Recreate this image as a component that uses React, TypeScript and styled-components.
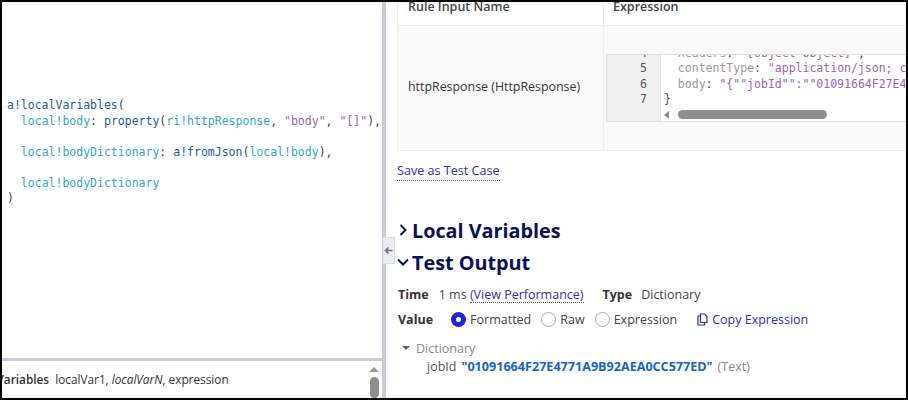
import styled, { createGlobalStyle } from "styled-components";

const GlobalStyle = createGlobalStyle`
  html, body {
    margin: 0;
    padding: 0;
    background: #fff;
  }
  body {
    font-family: "Open Sans", sans-serif;
    color: #333;
  }
`;

// Style >>>
const Frame = styled.div`
  width: 908px;
  height: 400px;
  box-sizing: border-box;
  border: 2px solid #000;
  display: flex;
  overflow: hidden;
  background: #fff;
`;
const LeftPane = styled.div`
  width: 380px;
  flex: none;
  display: flex;
  flex-direction: column;
`;
const Editor = styled.div`
  height: 359px;
  flex: none;
  box-sizing: border-box;
  padding-top: 96px;
  padding-left: 5px;
  border-bottom: 3px solid #c8ccd6;
`;
const CodeLine = styled.div`
  height: 15.5px;
  line-height: 15.5px;
  font-family: "DejaVu Sans Mono", monospace;
  font-size: 11.5px;
  white-space: pre;
  color: #444;
`;
const Fn = styled.span`
  color: #1d5c9c;
`;
const Local = styled.span`
  color: #36a3d3;
`;
const Str = styled.span`
  color: #9268b8;
`;
const Hint = styled.div`
  flex: 1;
  min-height: 0;
  display: flex;
  justify-content: space-between;
  overflow: hidden;
`;
const HintText = styled.div`
  font-size: 11.8px;
  line-height: 16px;
  margin-top: 10px;
  margin-left: -32px;
  white-space: pre;
  color: #333;
  b {
    font-weight: 600;
  }
`;
const HintScroll = styled.div`
  width: 10px;
  margin-right: 3px;
  margin-top: 6px;
  display: flex;
  flex-direction: column;
  align-items: center;
  gap: 5px;
  .track {
    width: 9px;
    height: 30px;
    border-radius: 5px;
    background: #8e8e8e;
  }
`;
const ArrowUp = styled.div`
  width: 0;
  height: 0;
  border: solid transparent;
  border-width: 0 5px 5px;
  border-bottom-color: #999;
`;
const Divider = styled.div`
  width: 4px;
  flex: none;
  background: #c8ccd6;
  position: relative;
`;
const CollapseTab = styled.div`
  position: absolute;
  left: 1px;
  top: 235px;
  width: 12px;
  height: 27px;
  box-sizing: border-box;
  background: #eaecf2;
  border: 1px solid #d8dbe2;
  border-left: none;
  display: flex;
  align-items: center;
  justify-content: center;
`;
const RightPane = styled.div`
  flex: 1;
  min-width: 0;
  overflow: hidden;
  padding-left: 11px;
  position: relative;
`;
const Table = styled.div`
  display: grid;
  grid-template-columns: 205px 1fr;
  margin-right: -4px;
  background: #fafafa;
  border-bottom: 1px solid #eee;
  border-left: 1px solid #eee;
`;
const HeadCell = styled.div<{ $first?: boolean }>`
  height: 23px;
  background: #fff;
  border-bottom: 1px solid #eee;
  border-left: ${({ $first }) => ($first ? "none" : "1px solid #eee")};
  font-size: 12.5px;
  font-weight: 600;
  line-height: 9px;
  padding-left: ${({ $first }) => ($first ? "10px" : "9px")};
  color: #444;
`;
const NameCell = styled.div`
  height: 124px;
  font-size: 12.4px;
  padding-left: 10px;
  padding-bottom: 3px;
  box-sizing: border-box;
  display: flex;
  align-items: center;
  color: #333;
`;
const ExprCell = styled.div`
  height: 124px;
  border-left: 1px solid #eee;
  padding-top: 28px;
  padding-left: 2px;
  box-sizing: border-box;
`;
const CodeBox = styled.div`
  height: 66px;
  display: flex;
  background: #fff;
  border: 1px solid #ddd;
  border-right: none;
  overflow: hidden;
`;
const Gutter = styled.div`
  width: 54px;
  flex: none;
  box-sizing: border-box;
  background: #f0f0f0;
  border-right: 1px solid #e4e4e4;
`;
const GutterNum = styled.div`
  height: 15.3px;
  line-height: 15.3px;
  text-align: right;
  padding-right: 13px;
  font-family: "DejaVu Sans Mono", monospace;
  font-size: 11.5px;
  color: #555;
  &:first-child {
    margin-top: -9px;
  }
`;
const CodeBody = styled.div`
  flex: 1;
  min-width: 0;
  position: relative;
  padding-left: 3px;
`;
const BoxLine = styled.div`
  height: 15.3px;
  line-height: 15.3px;
  font-family: "DejaVu Sans Mono", monospace;
  font-size: 11.5px;
  white-space: pre;
  color: #555;
  &:first-child {
    margin-top: -9px;
  }
  .key {
    color: #999;
  }
`;
const ScrollTrack = styled.div`
  position: absolute;
  left: 3px;
  bottom: 2px;
  display: flex;
  align-items: center;
  gap: 9px;
  .thumb {
    width: 149px;
    height: 9px;
    border-radius: 5px;
    background: #8e8e8e;
  }
`;
const ArrowLeft = styled.div`
  width: 0;
  height: 0;
  border: solid transparent;
  border-width: 4px 5px 4px 0;
  border-right-color: #888;
`;
const SaveLink = styled.a`
  display: inline-block;
  margin-top: 11px;
  margin-bottom: 33px;
  font-size: 12.6px;
  line-height: 18px;
  color: #2b2fb8;
  border-bottom: 1px dotted #555;
`;
const Section = styled.div`
  display: flex;
  align-items: center;
  height: 32px;
  gap: 3px;
  font-size: 19.8px;
  font-weight: 700;
  color: #0a1058;
`;
const Row = styled.div<{ $top?: number }>`
  display: flex;
  align-items: center;
  height: 25px;
  margin-top: ${({ $top }) => $top ?? 0}px;
  margin-left: 1px;
  font-size: 12.5px;
  white-space: pre;
  color: #444;
`;
const Label = styled.span<{ $left?: number; $right?: number }>`
  font-weight: 700;
  color: #333;
  margin-left: ${({ $left }) => $left ?? 0}px;
  margin-right: ${({ $right }) => $right ?? 0}px;
`;
const DottedLink = styled.span`
  color: #2b2fb8;
  border-bottom: 1px dotted #555;
  line-height: 15px;
`;
const Radio = styled.span<{ $on?: boolean; $left: number }>`
  width: 15px;
  height: 15px;
  box-sizing: border-box;
  border-radius: 50%;
  flex: none;
  margin-left: ${({ $left }) => $left}px;
  margin-right: 4px;
  background: #fff;
  border: ${({ $on }) => ($on ? "5px solid #2323d8" : "1px solid #aaa")};
`;
const CopyLink = styled.span`
  display: flex;
  align-items: center;
  gap: 3px;
  color: #2b2fb8;
  margin-left: 19px;
`;
const TreeRow = styled.div`
  display: flex;
  align-items: center;
  height: 18px;
  margin-top: 7px;
  margin-left: 5px;
  gap: 6px;
  font-size: 12.5px;
  color: #8a8a8a;
`;
const Caret = styled.span`
  width: 0;
  height: 0;
  border: solid transparent;
  border-width: 4px 4px 0;
  border-top-color: #666;
`;
const TreeValue = styled.div`
  display: flex;
  align-items: center;
  gap: 5px;
  height: 19px;
  margin-left: 30px;
  font-size: 12.5px;
  white-space: pre;
  color: #555;
  b {
    font-size: 12.6px;
    font-weight: 700;
    color: #1565c0;
  }
  span {
    color: #8a8a8a;
  }
`;
// Style <<<

const Chevron = ({ down }: { down?: boolean }) => (
  <svg width="12" height="12" viewBox="0 0 12 12" fill="none" stroke="#0a1058" strokeWidth="2">
    {down ? <path d="M1 3.5 6 8.5 11 3.5" /> : <path d="M3.5 1 8.5 6 3.5 11" />}
  </svg>
);

const App = () => {
  return (
    <>
      <GlobalStyle />
      <Frame>
        <LeftPane>
          <Editor>
            <CodeLine><Fn>a!localVariables</Fn>(</CodeLine>
            <CodeLine>  <Local>local!body</Local>: <Fn>property</Fn>(<Local>ri!httpResponse</Local>, <Str>"body"</Str>, <Str>"[]"</Str>),</CodeLine>
            <CodeLine> </CodeLine>
            <CodeLine>  <Local>local!bodyDictionary</Local>: <Fn>a!fromJson</Fn>(<Local>local!body</Local>),</CodeLine>
            <CodeLine> </CodeLine>
            <CodeLine>  <Local>local!bodyDictionary</Local></CodeLine>
            <CodeLine>)</CodeLine>
          </Editor>
          <Hint>
            <HintText><b>localVariables</b>  localVar1, <i>localVarN</i>, expression</HintText>
            <HintScroll>
              <ArrowUp />
              <div className="track" />
            </HintScroll>
          </Hint>
        </LeftPane>
        <Divider>
          <CollapseTab>
            <svg width="9" height="9" viewBox="0 0 9 9" fill="none" stroke="#6b6f78" strokeWidth="1.6">
              <path d="M8.5 4.5H1.5M4.5 1.5 1.5 4.5 4.5 7.5" />
            </svg>
          </CollapseTab>
        </Divider>
        <RightPane>
          <Table>
            <HeadCell $first>Rule Input Name</HeadCell>
            <HeadCell>Expression</HeadCell>
            <NameCell>httpResponse (HttpResponse)</NameCell>
            <ExprCell>
              <CodeBox>
                <Gutter>
                  <GutterNum>4</GutterNum>
                  <GutterNum>5</GutterNum>
                  <GutterNum>6</GutterNum>
                  <GutterNum>7</GutterNum>
                </Gutter>
                <CodeBody>
                  <BoxLine>  <span className="key">headers</span>: <Str>"[object Object]"</Str>,</BoxLine>
                  <BoxLine>  <span className="key">contentType</span>: <Str>"application/json; charset=utf-8"</Str>,</BoxLine>
                  <BoxLine>  <span className="key">body</span>: <Str>"&#123;""jobId"":""01091664F27E4771A9B92AEA0CC577ED""&#125;"</Str></BoxLine>
                  <BoxLine>&#125;</BoxLine>
                  <ScrollTrack>
                    <ArrowLeft />
                    <div className="thumb" />
                  </ScrollTrack>
                </CodeBody>
              </CodeBox>
            </ExprCell>
          </Table>
          <SaveLink>Save as Test Case</SaveLink>
          <Section><Chevron />Local Variables</Section>
          <Section><Chevron down />Test Output</Section>
          <Row $top={4}>
            <Label $right={10}>Time</Label>{"1 ms "}<DottedLink>(View Performance)</DottedLink>
            <Label $left={19} $right={9}>Type</Label>Dictionary
          </Row>
          <Row>
            <Label>Value</Label>
            <Radio $on $left={18} />Formatted
            <Radio $left={10} />Raw
            <Radio $left={10} />Expression
            <CopyLink>
              <svg width="13" height="13" viewBox="0 0 13 13" fill="none" stroke="#2b2fb8" strokeWidth="1.2">
                <path d="M4.5 1h4l2.500 2.500V9.500h-6.500zM4.500 3H2v9h6.500v-2.500" />
              </svg>
              Copy Expression
            </CopyLink>
          </Row>
          <TreeRow><Caret />Dictionary</TreeRow>
          <TreeValue>jobId<b>"01091664F27E4771A9B92AEA0CC577ED"</b><span>(Text)</span></TreeValue>
        </RightPane>
      </Frame>
    </>
  );
};

export default App;
